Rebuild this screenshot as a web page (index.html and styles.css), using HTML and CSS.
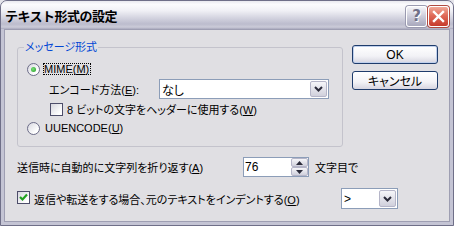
FILE: index.html
```html
<!DOCTYPE html>
<html lang="ja">
<head>
    <meta charset="UTF-8">
    <title>テキスト形式の設定</title>
    <link rel="stylesheet" href="styles.css">
</head>
<body>
    <div class="window">
        <div class="titlebar">
            <span class="title">テキスト形式の設定</span>
            <div class="caption-buttons">
                <div class="cap cap-help">?</div>
                <div class="cap cap-close">
                    <svg width="13" height="13" viewBox="0 0 13 13">
                        <path d="M2 2 L11 11 M11 2 L2 11" stroke="#fff" stroke-width="2.4" stroke-linecap="square"/>
                    </svg>
                </div>
            </div>
        </div>

        <div class="client">
            <div class="top">
                <fieldset class="group">
                    <legend>メッセージ形式</legend>

                    <div class="opt">
                        <span class="radio checked"></span>
                        <span class="focus">MIME(<u>M</u>)</span>
                    </div>

                    <div class="opt opt-encode">
                        <span class="encode-label">エンコード方法(<u>E</u>):</span>
                        <div class="combo combo-wide">
                            <span class="combo-text">なし</span>
                            <span class="drop"><svg width="9" height="6" viewBox="0 0 9 6"><path d="M1 1 L4.5 4.5 L8 1" fill="none" stroke="#2b2b3a" stroke-width="2"/></svg></span>
                        </div>
                    </div>

                    <div class="opt opt-check">
                        <span class="check"></span>
                        <span class="check-text">8 ビットの文字をヘッダーに使用する(<u>W</u>)</span>
                    </div>

                    <div class="opt opt-uu">
                        <span class="radio"></span>
                        <span class="radio-text">UUENCODE(<u>U</u>)</span>
                    </div>
                </fieldset>

                <div class="buttons">
                    <div class="btn btn-default">OK</div>
                    <div class="btn">キャンセル</div>
                </div>
            </div>

            <div class="line wrap-line">
                <span class="wrap-label">送信時に自動的に文字列を折り返す(<u>A</u>)</span>
                <div class="spin">
                    <span class="spin-text">76</span>
                    <div class="spin-btns">
                        <span class="spin-btn"><svg width="7" height="4" viewBox="0 0 7 4"><path d="M0 4 L3.5 0 L7 4 Z" fill="#2b2b3a"/></svg></span>
                        <span class="spin-btn"><svg width="7" height="4" viewBox="0 0 7 4"><path d="M0 0 L3.5 4 L7 0 Z" fill="#2b2b3a"/></svg></span>
                    </div>
                </div>
                <span class="unit">文字目で</span>
            </div>

            <div class="line indent-line">
                <div class="indent-label">
                    <span class="check on">
                        <svg width="11" height="11" viewBox="0 0 11 11"><path d="M2 5 L4.5 7.5 L9 2.5" fill="none" stroke="#21a121" stroke-width="2.2"/></svg>
                    </span>
                    <span class="check-text">返信や転送をする場合、元のテキストをインデントする(<u>O</u>)</span>
                </div>
                <div class="combo combo-small">
                    <span class="combo-text">&gt;</span>
                    <span class="drop"><svg width="9" height="6" viewBox="0 0 9 6"><path d="M1 1 L4.5 4.5 L8 1" fill="none" stroke="#2b2b3a" stroke-width="2"/></svg></span>
                </div>
            </div>
        </div>
    </div>
</body>
</html>
```

FILE: styles.css
```css
* {
    margin: 0;
    padding: 0;
    box-sizing: border-box;
}

body {
    width: 454px;
    height: 226px;
    overflow: hidden;
    background: #e4e4ea;
    color: #000;
    font-family: "Liberation Sans", "Noto Sans CJK JP", sans-serif;
    font-size: 11px;
    font-feature-settings: "palt";
}

u {
    text-decoration: underline;
    text-underline-offset: 1px;
}

.window {
    width: 454px;
    height: 226px;
    display: flex;
    flex-direction: column;
    background: #c4c4d4;
    border: 1px solid #6f6f88;
    border-radius: 7px 7px 0 0;
    overflow: hidden;
}

/* タイトルバー */
.titlebar {
    height: 28px;
    flex: none;
    display: flex;
    align-items: center;
    justify-content: space-between;
    padding: 0 4px 0 4px;
    background: linear-gradient(to bottom, #e9e9ef 0%, #fbfbfd 12%, #f0f0f5 35%, #d4d4e0 60%, #bcbccd 82%, #cbcbd8 93%, #a9a9bd 100%);
}

.title {
    font-size: 13px;
    font-weight: bold;
    font-feature-settings: normal;
    color: #000;
    letter-spacing: -0.5px;
    padding-top: 1px;
}

.caption-buttons {
    display: flex;
    gap: 1px;
    padding-top: 2px;
}

.cap {
    width: 21px;
    height: 21px;
    border: 1px solid #fff;
    border-radius: 3px;
    display: flex;
    align-items: center;
    justify-content: center;
}

.cap-help {
    background: linear-gradient(to bottom, #f4f4f8, #c4c4d4 60%, #a8a8bc);
    box-shadow: 0 0 0 1px #9a9ab0;
    color: #707088;
    font-family: "DejaVu Sans", sans-serif;
    font-size: 15px;
    font-weight: bold;
    text-shadow: 1px 1px 0 #fff;
}

.cap-close {
    background: linear-gradient(to bottom, #f0a898, #e06a58 45%, #c63a2c);
    box-shadow: 0 0 0 1px #b04a40;
}

/* クライアント領域 */
.client {
    flex: 1;
    margin: 0 3px 3px;
    border: 1px solid #9e9eb2;
    background: #e0dfe3;
    padding: 10px 0 0 12px;
}

.top {
    display: flex;
    align-items: flex-start;
}

.group {
    width: 326px;
    border: 1px solid #c4c3cc;
    border-radius: 3px;
    padding: 7px 0 10px 0;
}

.group legend {
    margin-left: 6px;
    padding: 0 1px;
    line-height: 14px;
    color: #0046d5;
}

.opt {
    display: flex;
    align-items: center;
    height: 16px;
    padding-left: 9px;
}

.opt-encode {
    height: 20px;
    margin-top: 2px;
    padding-left: 31px;
}

.opt-check {
    margin-top: 2px;
    padding-left: 32px;
}

.opt-uu {
    margin-top: 3px;
}

.radio {
    width: 13px;
    height: 13px;
    flex: none;
    border: 1px solid #6c6c88;
    border-radius: 50%;
    background: linear-gradient(135deg, #d8d8e0, #fff 75%);
    display: flex;
    align-items: center;
    justify-content: center;
}

.radio.checked::after {
    content: "";
    width: 5px;
    height: 5px;
    border-radius: 50%;
    background: radial-gradient(circle at 40% 40%, #7be07b, #1f9a1f);
}

.focus {
    margin-left: 3px;
    border: 1px dotted #000;
    line-height: 10px;
    padding: 0 1px 0 0;
}

.radio-text {
    margin-left: 5px;
}

.encode-label {
    width: 110px;
    flex: none;
}

.check {
    width: 13px;
    height: 13px;
    flex: none;
    border: 1px solid #4d4d6a;
    background: linear-gradient(135deg, #d6d6de, #fff 80%);
    display: flex;
    align-items: center;
    justify-content: center;
}

.check-text {
    margin-left: 4px;
}

/* コンボボックス */
.combo {
    display: flex;
    align-items: stretch;
    border: 1px solid #8c9db8;
    background: #fff;
    padding: 1px;
}

.combo-wide {
    width: 170px;
    height: 20px;
}

.combo-small {
    width: 57px;
    height: 21px;
}

.combo-text {
    flex: 1;
    display: flex;
    align-items: center;
    padding-left: 1px;
    font-size: 12px;
}

.drop {
    width: 17px;
    flex: none;
    border: 1px solid #b5b5c8;
    border-radius: 2px;
    background: linear-gradient(to bottom, #f6f6f9, #d0d0dc);
    display: flex;
    align-items: center;
    justify-content: center;
}

/* ボタン */
.buttons {
    margin: 5px 0 0 9px;
    display: flex;
    flex-direction: column;
    gap: 7px;
}

.btn {
    width: 86px;
    height: 19px;
    border: 1px solid #1f3c6c;
    border-radius: 3px;
    background: linear-gradient(to bottom, #ffffff, #f2f2f6 60%, #d6d5e0);
    display: flex;
    align-items: center;
    justify-content: center;
    font-size: 12px;
}

.btn-default {
    box-shadow: inset 0 0 0 1px #c0d0ec;
}

/* 下の行 */
.line {
    display: flex;
    align-items: center;
}

.wrap-line {
    margin-top: 10px;
    height: 20px;
}

.wrap-label {
    width: 226px;
    flex: none;
}

.spin {
    width: 66px;
    height: 20px;
    display: flex;
    border: 1px solid #8c9db8;
    background: #fff;
}

.spin-text {
    flex: 1;
    display: flex;
    align-items: center;
    padding-left: 1px;
    font-size: 12px;
}

.spin-btns {
    width: 17px;
    display: flex;
    flex-direction: column;
}

.spin-btn {
    flex: 1;
    border: 1px solid #b5b5c8;
    border-radius: 2px;
    background: linear-gradient(to bottom, #f6f6f9, #d0d0dc);
    display: flex;
    align-items: center;
    justify-content: center;
}

.unit {
    margin-left: 6px;
}

.indent-line {
    margin-top: 11px;
    height: 21px;
}

.indent-label {
    width: 324px;
    flex: none;
    display: flex;
    align-items: center;
}

.indent-label .check {
    margin-bottom: 3px;
}
```
